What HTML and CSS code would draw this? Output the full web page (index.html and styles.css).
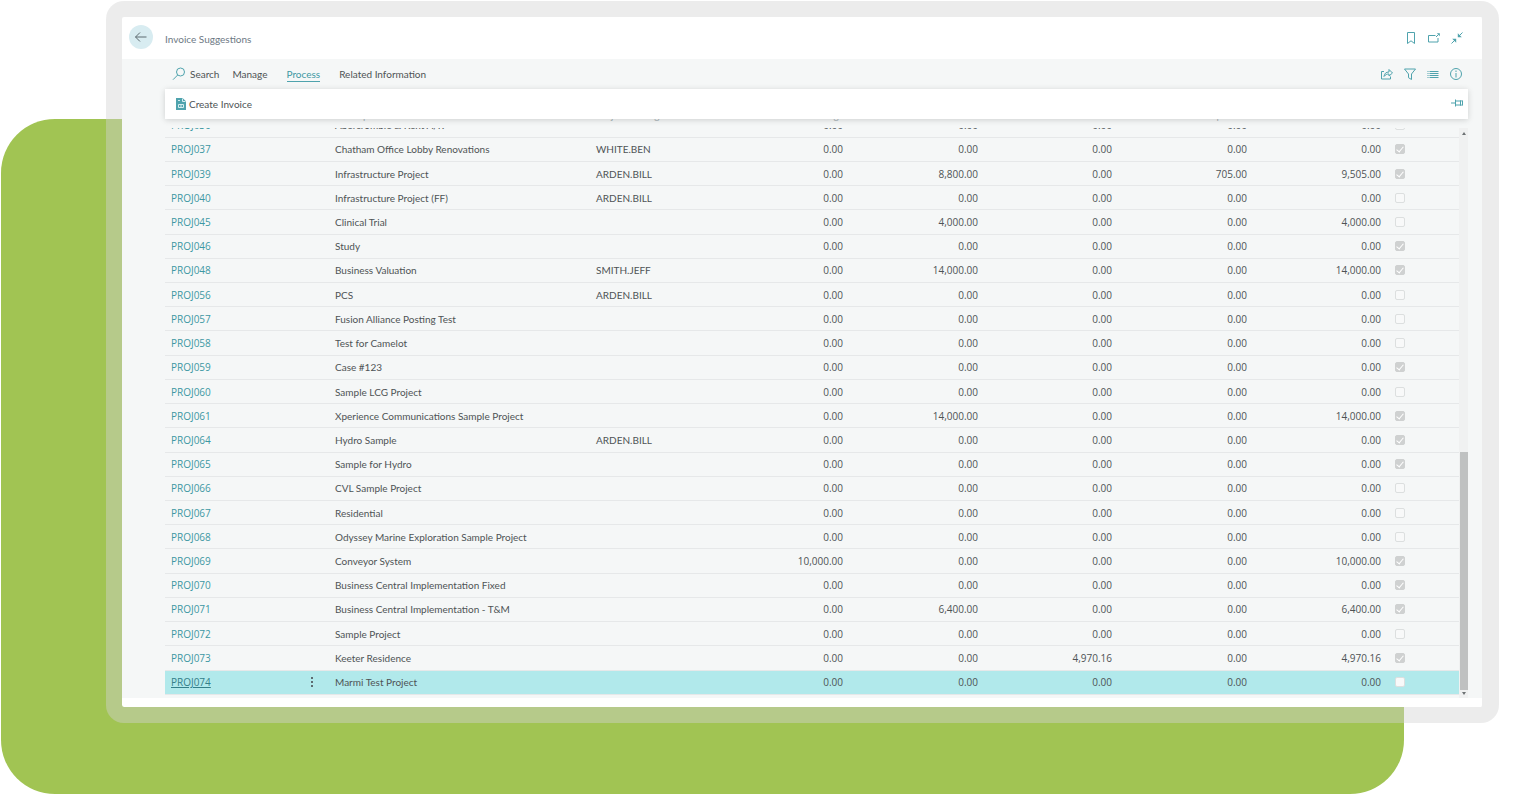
FILE: index.html
```html
<!DOCTYPE html>
<html lang="en">
<head>
<meta charset="utf-8">
<title>Invoice Suggestions</title>
<link rel="stylesheet" href="styles.css">
</head>
<body>
<div class="stage">
<div class="backdrop"></div>
<main class="frame">
<header class="titlebar">
<button class="back" aria-label="Back"><svg width="14" height="12" viewBox="0 0 14 12"><path d="M12.500 6H1.500M6 1.500L1.500 6 6 10.500"/></svg></button>
<h1>Invoice Suggestions</h1>
<div class="tools">
<button aria-label="Bookmark"><svg viewBox="0 0 14 14"><path d="M3.500 1.500h7v11L7 9.800l-3.500 2.700z"/></svg></button>
<button aria-label="Open in new window"><svg viewBox="0 0 14 14"><path d="M8.500 4.500h-7v6.500h9.500V7M9 6l2.500-2.500"/><path class="solid" d="M9.800 2.200h3v3z"/></svg></button>
<button aria-label="Collapse"><svg viewBox="0 0 14 14"><path d="M12.500 1.500L9 5M1.500 12.500L5 9"/><path class="solid" d="M7.800 2.200v4h4zM2.200 7.800h4v4z"/></svg></button>
</div>
</header>
<section class="content">
<nav class="tabs">
<button class="search"><svg viewBox="0 0 14 14"><circle cx="8.500" cy="5" r="4"/><path d="M5.700 8L1 12.700"/></svg>Search</button>
<button>Manage</button>
<button class="active">Process</button>
<button>Related Information</button>
<div class="tools">
<button aria-label="Share"><svg viewBox="0 0 14 14"><path d="M4 4.500H1.500v7.500h9V9.500M4 9.500c.4-3 2-4.500 5-4.500V2.500L12.500 6 9 9V7C7 7 5.300 7.700 4 9.500z"/></svg></button>
<button aria-label="Filter"><svg viewBox="0 0 14 14"><path d="M1.500 2h11L8.500 7v5.500l-3-1.800V7z"/></svg></button>
<button aria-label="List view"><svg viewBox="0 0 14 14"><path d="M1.500 4.500h1M3.500 4.500h9M1.500 6.500h1M3.500 6.500h9M1.500 8.500h1M3.500 8.500h9M1.500 10.500h1M3.500 10.500h9"/></svg></button>
<button aria-label="Details"><svg viewBox="0 0 14 14"><circle cx="7" cy="7" r="5.500"/><path d="M7 6v4.500M7 3.500V5"/></svg></button>
</div>
</nav>
<div class="actionbar">
<button class="create"><svg width="10" height="13" viewBox="0 0 10 13"><path class="solid" d="M0 0h6.500L10 3.200V12H0z"/><path class="detail" d="M6.500.5v3h3M2.500 6.500h5v3h-5zM5 6.500v3M2 2.500h2"/></svg>Create Invoice</button>
<button class="pin" aria-label="Pin"><svg width="14" height="12" viewBox="0 0 14 12"><path d="M1 5h4M5.500 1.500v7M5.500 3h5M5.500 7h5M10.500 2.500c.7.500 1.200.500 2 .2v4.600c-.8-.3-1.300-.3-2 .2z"/></svg></button>
</div>
<table class="grid head">
<colgroup><col class="c-no"><col class="c-desc"><col class="c-mgr"><col class="c-amt"><col class="c-amt"><col class="c-sum"><col class="c-amt"><col class="c-sum"><col class="c-sel"></colgroup>
<tr><th>No.</th><th>Description</th><th>Project Manager</th><th class="n">Scheduled Billings</th><th class="n">Resource</th><th class="n">Items</th><th class="n">Expenses</th><th class="n">Total</th><th>Selected</th></tr>
</table>
<div class="listarea">
<div class="rows">
<table class="grid body">
<colgroup><col class="c-no"><col class="c-desc"><col class="c-mgr"><col class="c-amt"><col class="c-amt"><col class="c-sum"><col class="c-amt"><col class="c-sum"><col class="c-sel"></colgroup>
<tr><td><a href="#">PROJ036</a></td><td>Abercrombie &amp; Kent A/R</td><td></td><td>0.00</td><td>0.00</td><td>0.00</td><td>0.00</td><td>0.00</td><td><input type="checkbox" aria-label="PROJ036" disabled></td></tr>
<tr><td><a href="#">PROJ037</a></td><td>Chatham Office Lobby Renovations</td><td>WHITE.BEN</td><td>0.00</td><td>0.00</td><td>0.00</td><td>0.00</td><td>0.00</td><td><input type="checkbox" aria-label="PROJ037" disabled checked></td></tr>
<tr><td><a href="#">PROJ039</a></td><td>Infrastructure Project</td><td>ARDEN.BILL</td><td>0.00</td><td>8,800.00</td><td>0.00</td><td>705.00</td><td>9,505.00</td><td><input type="checkbox" aria-label="PROJ039" disabled checked></td></tr>
<tr><td><a href="#">PROJ040</a></td><td>Infrastructure Project (FF)</td><td>ARDEN.BILL</td><td>0.00</td><td>0.00</td><td>0.00</td><td>0.00</td><td>0.00</td><td><input type="checkbox" aria-label="PROJ040" disabled></td></tr>
<tr><td><a href="#">PROJ045</a></td><td>Clinical Trial</td><td></td><td>0.00</td><td>4,000.00</td><td>0.00</td><td>0.00</td><td>4,000.00</td><td><input type="checkbox" aria-label="PROJ045" disabled></td></tr>
<tr><td><a href="#">PROJ046</a></td><td>Study</td><td></td><td>0.00</td><td>0.00</td><td>0.00</td><td>0.00</td><td>0.00</td><td><input type="checkbox" aria-label="PROJ046" disabled checked></td></tr>
<tr><td><a href="#">PROJ048</a></td><td>Business Valuation</td><td>SMITH.JEFF</td><td>0.00</td><td>14,000.00</td><td>0.00</td><td>0.00</td><td>14,000.00</td><td><input type="checkbox" aria-label="PROJ048" disabled checked></td></tr>
<tr><td><a href="#">PROJ056</a></td><td>PCS</td><td>ARDEN.BILL</td><td>0.00</td><td>0.00</td><td>0.00</td><td>0.00</td><td>0.00</td><td><input type="checkbox" aria-label="PROJ056" disabled></td></tr>
<tr><td><a href="#">PROJ057</a></td><td>Fusion Alliance Posting Test</td><td></td><td>0.00</td><td>0.00</td><td>0.00</td><td>0.00</td><td>0.00</td><td><input type="checkbox" aria-label="PROJ057" disabled></td></tr>
<tr><td><a href="#">PROJ058</a></td><td>Test for Camelot</td><td></td><td>0.00</td><td>0.00</td><td>0.00</td><td>0.00</td><td>0.00</td><td><input type="checkbox" aria-label="PROJ058" disabled></td></tr>
<tr><td><a href="#">PROJ059</a></td><td>Case #123</td><td></td><td>0.00</td><td>0.00</td><td>0.00</td><td>0.00</td><td>0.00</td><td><input type="checkbox" aria-label="PROJ059" disabled checked></td></tr>
<tr><td><a href="#">PROJ060</a></td><td>Sample LCG Project</td><td></td><td>0.00</td><td>0.00</td><td>0.00</td><td>0.00</td><td>0.00</td><td><input type="checkbox" aria-label="PROJ060" disabled></td></tr>
<tr><td><a href="#">PROJ061</a></td><td>Xperience Communications Sample Project</td><td></td><td>0.00</td><td>14,000.00</td><td>0.00</td><td>0.00</td><td>14,000.00</td><td><input type="checkbox" aria-label="PROJ061" disabled checked></td></tr>
<tr><td><a href="#">PROJ064</a></td><td>Hydro Sample</td><td>ARDEN.BILL</td><td>0.00</td><td>0.00</td><td>0.00</td><td>0.00</td><td>0.00</td><td><input type="checkbox" aria-label="PROJ064" disabled checked></td></tr>
<tr><td><a href="#">PROJ065</a></td><td>Sample for Hydro</td><td></td><td>0.00</td><td>0.00</td><td>0.00</td><td>0.00</td><td>0.00</td><td><input type="checkbox" aria-label="PROJ065" disabled checked></td></tr>
<tr><td><a href="#">PROJ066</a></td><td>CVL Sample Project</td><td></td><td>0.00</td><td>0.00</td><td>0.00</td><td>0.00</td><td>0.00</td><td><input type="checkbox" aria-label="PROJ066" disabled></td></tr>
<tr><td><a href="#">PROJ067</a></td><td>Residential</td><td></td><td>0.00</td><td>0.00</td><td>0.00</td><td>0.00</td><td>0.00</td><td><input type="checkbox" aria-label="PROJ067" disabled></td></tr>
<tr><td><a href="#">PROJ068</a></td><td>Odyssey Marine Exploration Sample Project</td><td></td><td>0.00</td><td>0.00</td><td>0.00</td><td>0.00</td><td>0.00</td><td><input type="checkbox" aria-label="PROJ068" disabled></td></tr>
<tr><td><a href="#">PROJ069</a></td><td>Conveyor System</td><td></td><td>10,000.00</td><td>0.00</td><td>0.00</td><td>0.00</td><td>10,000.00</td><td><input type="checkbox" aria-label="PROJ069" disabled checked></td></tr>
<tr><td><a href="#">PROJ070</a></td><td>Business Central Implementation Fixed</td><td></td><td>0.00</td><td>0.00</td><td>0.00</td><td>0.00</td><td>0.00</td><td><input type="checkbox" aria-label="PROJ070" disabled checked></td></tr>
<tr><td><a href="#">PROJ071</a></td><td>Business Central Implementation - T&amp;M</td><td></td><td>0.00</td><td>6,400.00</td><td>0.00</td><td>0.00</td><td>6,400.00</td><td><input type="checkbox" aria-label="PROJ071" disabled checked></td></tr>
<tr><td><a href="#">PROJ072</a></td><td>Sample Project</td><td></td><td>0.00</td><td>0.00</td><td>0.00</td><td>0.00</td><td>0.00</td><td><input type="checkbox" aria-label="PROJ072" disabled></td></tr>
<tr><td><a href="#">PROJ073</a></td><td>Keeter Residence</td><td></td><td>0.00</td><td>0.00</td><td>4,970.16</td><td>0.00</td><td>4,970.16</td><td><input type="checkbox" aria-label="PROJ073" disabled checked></td></tr>
<tr class="selected"><td><div class="keycell"><a href="#">PROJ074</a><button aria-label="Show more options"><svg width="4" height="12" viewBox="0 0 4 12"><path d="M1 1h2v2H1zM1 5h2v2H1zM1 9h2v2H1z"/></svg></button></div></td><td>Marmi Test Project</td><td></td><td>0.00</td><td>0.00</td><td>0.00</td><td>0.00</td><td>0.00</td><td><input type="checkbox" aria-label="PROJ074" disabled></td></tr>
</table>
</div>
<div class="scrollbar"><span class="up"></span><div class="track"><div class="thumb"></div></div><span class="down"></span></div>
</div>
</section>
</main>
</div>
</body>
</html>
```
FILE: styles.css
```css
* { box-sizing: border-box; }
body { margin: 0; background: #fff; color: #4e5355; font: 10px/14px Lato, "Open Sans", sans-serif; }
button { display: flex; align-items: center; padding: 0; border: 0; background: none; color: inherit; font: inherit; }
svg { display: block; fill: none; stroke: #4fa3ad; stroke-width: 1; }
.solid { fill: #4fa3ad; stroke: none; }

.stage { position: relative; min-height: 100vh; padding: 1px 18px 71px 106px; }
.backdrop { position: absolute; inset: 119px 113px 0 1px; border-radius: 54px; background: #a1c453; }
.frame { position: relative; border: 16px solid rgba(212, 212, 212, .43); border-right-width: 17px; border-radius: 18px; background: #fff; background-clip: padding-box; padding-bottom: 9px; }

.titlebar { display: flex; align-items: center; height: 42px; padding: 0 18px 0 7px; }
.titlebar h1 { flex: 1; margin: 2px 0 0 12px; color: #6d7984; font-size: 10px; font-weight: 400; }
.back { justify-content: center; width: 24px; height: 24px; margin-bottom: 2px; border-radius: 50%; background: #d8ecf1; }
.back svg { stroke: #5d6b70; }
.tools { display: flex; gap: 9px; }
.tools svg { width: 14px; height: 14px; }

.content { background: #f5f7f7; padding: 0 14px 0 43px; }
.tabs { display: flex; align-items: center; height: 30px; padding: 0 5px 0 7px; }
.tabs > button { margin-right: 13px; }
.tabs .search svg { width: 14px; height: 14px; margin-right: 4px; }
.tabs .active { margin: 0 19px 0 6px; color: #3d98a3; box-shadow: 0 1px #4fa3ad; }
.tabs .tools { margin-left: auto; }
.actionbar { position: relative; display: flex; align-items: center; justify-content: space-between; height: 30px; padding: 0 4px 0 11px; background: #fff; box-shadow: 0 1px 6px rgba(0, 0, 0, .16); }
.create svg { margin-right: 3px; }
.create .detail { stroke: #d5edf0; }

.grid { width: 100%; border-collapse: collapse; table-layout: fixed; }
.grid th, .grid td { height: 24px; padding: 0 6px; text-align: left; font-weight: 400; white-space: nowrap; }
.c-no { width: 164px; }
.c-desc { width: 261px; }
.c-mgr { width: 124px; }
.c-amt { width: 135px; }
.c-sum { width: 134px; }
.c-sel { width: 72px; }
.head { width: calc(100% - 9px); margin-top: -17px; color: #a9b4b8; }
.head .n { text-align: right; }
.head th { height: 26px; }

.listarea { display: flex; height: 570px; }
.rows { display: flex; flex: 1; flex-direction: column; justify-content: flex-end; overflow: hidden; padding-bottom: 3px; }
.body { flex: none; height: 582px; }
.body tr { border-bottom: 1px solid #e6e8e9; }
.body td:nth-child(n+4):nth-child(-n+8) { text-align: right; font-family: "Open Sans", sans-serif; }
.body a { color: #3d98a3; font-family: "Open Sans", sans-serif; text-decoration: none; }
.body .selected { background: #b1e9eb; }
.body .selected a { color: #347f89; text-decoration: underline; }
.keycell { display: flex; justify-content: space-between; padding-right: 9px; }
.keycell path { fill: #5d6b70; stroke: none; }
.body input { position: relative; display: block; width: 10px; height: 10px; margin: 0 0 0 2px; appearance: none; border: 1px solid #dcdfdf; border-radius: 2px; background: #f8f9f9; }
.body input:checked { background: #cfd1d1; border-color: #cfd1d1; }
.body input:checked::after { content: ""; position: absolute; left: 2px; top: 0; width: 3px; height: 6px; border: solid #fff; border-width: 0 1px 1px 0; transform: rotate(40deg); }

.scrollbar { display: flex; flex-direction: column; align-items: center; width: 9px; padding: 4px 0 3px; background: #f0f1f1; }
.track { display: flex; flex: 1; flex-direction: column; justify-content: flex-end; width: 8px; padding: 2px 0; }
.thumb { height: 43%; background: #bfc1c1; }
.up, .down { border: 2px solid transparent; }
.up { border-top: 0; border-bottom: 3px solid #6d7274; }
.down { border-bottom: 0; border-top: 3px solid #6d7274; }
```
